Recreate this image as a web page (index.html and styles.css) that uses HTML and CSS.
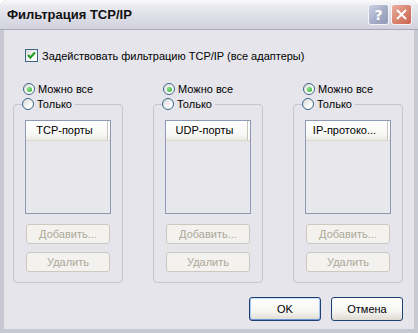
FILE: index.html
```html
<!DOCTYPE html>
<html lang="ru">
<head>
<meta charset="utf-8">
<title>Фильтрация TCP/IP</title>
<link rel="stylesheet" href="styles.css">
</head>
<body>
<div class="window">
  <div class="titlebar">
    <span class="title">Фильтрация TCP/IP</span>
    <div class="tb-buttons">
      <span class="tb-btn help">?</span>
      <span class="tb-btn close"><svg width="11" height="11" viewBox="0 0 11 11"><path d="M1.5 1.5 L9.5 9.5 M9.5 1.5 L1.5 9.5" stroke="#fff" stroke-width="2" stroke-linecap="round"/></svg></span>
    </div>
  </div>
  <div class="frame">
    <div class="content">
      <div class="check-row">
        <span class="checkbox"><svg width="11" height="11" viewBox="0 0 11 11"><path d="M2 5 L4.3 7.6 L9 2.6" stroke="#21a121" stroke-width="2.2" fill="none"/></svg></span>
        <span>Задействовать фильтрацию TCP/IP (все адаптеры)</span>
      </div>
      <div class="columns">
        <div class="col">
          <div class="radio-row"><span class="radio on"></span><span>Можно все</span></div>
          <fieldset class="group">
            <legend class="legend"><span class="radio"></span><span>Только</span></legend>
            <div class="listbox"><div class="lb-head"><span class="lb-col">TCP-порты</span></div></div>
            <button class="btn-dis first">Добавить...</button>
            <button class="btn-dis">Удалить</button>
          </fieldset>
        </div>
        <div class="col">
          <div class="radio-row"><span class="radio on"></span><span>Можно все</span></div>
          <fieldset class="group">
            <legend class="legend"><span class="radio"></span><span>Только</span></legend>
            <div class="listbox"><div class="lb-head"><span class="lb-col">UDP-порты</span></div></div>
            <button class="btn-dis first">Добавить...</button>
            <button class="btn-dis">Удалить</button>
          </fieldset>
        </div>
        <div class="col">
          <div class="radio-row"><span class="radio on"></span><span>Можно все</span></div>
          <fieldset class="group">
            <legend class="legend"><span class="radio"></span><span>Только</span></legend>
            <div class="listbox"><div class="lb-head"><span class="lb-col">IP-протоко...</span></div></div>
            <button class="btn-dis first">Добавить...</button>
            <button class="btn-dis">Удалить</button>
          </fieldset>
        </div>
      </div>
      <div class="footer">
        <button class="xp-btn default">OK</button>
        <button class="xp-btn">Отмена</button>
      </div>
    </div>
  </div>
</div>
</body>
</html>
```
FILE: styles.css
```css
* { box-sizing: border-box; }
body {
  margin: 0;
  background: #ffffff;
  font-family: "Liberation Sans", Arial, sans-serif;
  font-size: 11px;
  color: #000;
}
.window {
  width: 418px;
  height: 333px;
  display: flex;
  flex-direction: column;
  border-radius: 7px 7px 0 0;
  overflow: hidden;
  background: #c4c4d0;
}
.titlebar {
  height: 30px;
  flex: none;
  display: flex;
  align-items: center;
  justify-content: space-between;
  padding: 0 6px 0 7px;
  background: linear-gradient(#fbfbfd 0%, #ebebf1 20%, #dedee7 55%, #d2d2de 100%);
  border-bottom: 1px solid #a9a9b9;
}
.title {
  font-weight: bold;
  font-size: 13px;
  color: #111;
}
.tb-buttons { display: flex; gap: 2px; }
.tb-btn {
  width: 21px;
  height: 21px;
  border-radius: 3px;
  border: 1px solid #f4f4f8;
  display: flex;
  align-items: center;
  justify-content: center;
}
.help {
  background: linear-gradient(135deg, #cdd2e2 0%, #a7aec8 50%, #8f98b6 100%);
  color: #fff;
  font-family: "DejaVu Sans", sans-serif;
  font-weight: bold;
  font-size: 14px;
}
.close {
  background: linear-gradient(135deg, #eab0a2 0%, #d98672 50%, #c8624e 100%);
}
.frame {
  flex: 1;
  display: flex;
  border-style: solid;
  border-color: #c8c8d3;
  border-width: 0 4px 4px 4px;
  box-shadow: inset 1px 0 #9d9daf, inset -1px 0 #9d9daf, inset 0 -1px #9d9daf;
  background: #e5e5eb;
}
.content {
  flex: 1;
  display: flex;
  flex-direction: column;
  padding: 19px 11px 7px 9px;
  background: #e5e5eb;
}
.check-row {
  display: flex;
  align-items: center;
  gap: 4px;
  height: 13px;
  margin-left: 12px;
}
.checkbox {
  width: 13px;
  height: 13px;
  flex: none;
  border: 1px solid #3b6589;
  background: linear-gradient(135deg, #dcdcd7, #ffffff 75%);
  display: flex;
  align-items: center;
  justify-content: center;
}
.columns {
  display: flex;
  gap: 30px;
  margin-top: 20px;
}
.col { width: 110px; }
.radio-row {
  display: flex;
  align-items: center;
  gap: 3px;
  height: 14px;
  margin-left: 10px;
  margin-bottom: 1px;
}
.radio {
  width: 12px;
  height: 12px;
  flex: none;
  border-radius: 50%;
  border: 1px solid #3b6589;
  background: linear-gradient(135deg, #d8d8d3, #ffffff 75%);
  display: flex;
  align-items: center;
  justify-content: center;
}
.radio.on::after {
  content: "";
  width: 5px;
  height: 5px;
  border-radius: 50%;
  background: radial-gradient(circle at 35% 35%, #8ae889, #27a427);
}
.group {
  margin: 0;
  padding: 0 0 10px 0;
  min-width: 0;
  border: 1px solid #c6c5cf;
  border-radius: 4px;
}
.legend {
  display: flex;
  align-items: center;
  gap: 3px;
  height: 14px;
  padding: 0 3px 0 0;
  margin-left: 8px;
}
.listbox {
  width: 86px;
  height: 94px;
  margin: 9px auto 0;
  border: 1px solid #8f99b4;
  background: #e7e7ec;
}
.lb-head {
  height: 20px;
  display: flex;
  background: linear-gradient(#ffffff, #f7f7f5 70%, #ecebe6);
  border-bottom: 1px solid #d9d7cf;
}
.lb-col {
  width: 82px;
  padding: 0 8px 0 4px;
  text-align: center;
  line-height: 19px;
  white-space: nowrap;
  overflow: hidden;
  border-right: 1px solid #c7c5ba;
  box-shadow: 1px 0 #ffffff;
}
.btn-dis {
  display: block;
  width: 84px;
  height: 20px;
  margin: 8px auto 0;
  padding: 0;
  border: 1px solid #cbc9be;
  border-radius: 3px;
  background: #f3f2ee;
  color: #aca899;
  font: inherit;
}
.btn-dis.first { margin-top: 10px; }
.footer {
  display: flex;
  justify-content: flex-end;
  gap: 10px;
  margin-top: 14px;
}
.xp-btn {
  width: 72px;
  height: 24px;
  padding: 0;
  border: 1px solid #1d3f72;
  border-radius: 3px;
  background: linear-gradient(#ffffff 0%, #f5f5f2 60%, #dedbd2 100%);
  font: inherit;
  color: #000;
}
.xp-btn.default {
  box-shadow: inset 0 1px #cde3fb, inset 0 -1px #6d93d8, inset 1px 0 #a9c8f2, inset -1px 0 #a9c8f2;
}
```
